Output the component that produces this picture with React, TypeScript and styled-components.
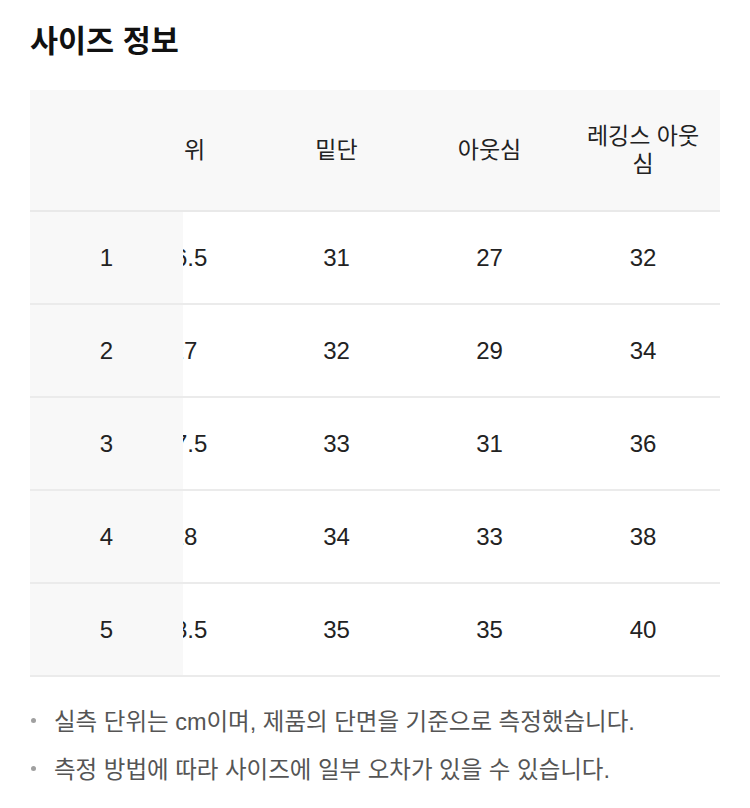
import React, { useLayoutEffect, useRef } from "react";
import styled, { createGlobalStyle } from "styled-components";

const GlobalStyle = createGlobalStyle`
  html, body { margin: 0; padding: 0; background: #ffffff; }
  body {
    font-family: "Liberation Sans", "Noto Sans CJK KR", sans-serif;
    color: #222222;
    -webkit-font-smoothing: antialiased;
  }
`;

const Page = styled.div`
  width: 750px;
  padding: 21px 30px 0 30px;
  box-sizing: border-box;
`;

const Title = styled.h2`
  margin: 0 0 28px 0;
  font-size: 30.5px;
  line-height: 41px;
  font-weight: 700;
  color: #111111;
`;

const ScrollArea = styled.div`
  width: 690px;
  overflow-x: auto;
  scrollbar-width: none;
  &::-webkit-scrollbar { display: none; }
`;

const Table = styled.table`
  width: 765px;
  table-layout: fixed;
  border-collapse: separate;
  border-spacing: 0;
`;

const HeadCell = styled.th<{ $sticky?: boolean }>`
  height: 122px;
  padding: 0 14px;
  box-sizing: border-box;
  background: #f8f8f8;
  border-bottom: 2px solid #e9e9e9;
  font-size: 23px;
  line-height: 28px;
  font-weight: 400;
  color: #222222;
  text-align: center;
  vertical-align: middle;
  ${(p) => (p.$sticky ? "position: sticky; left: 0; z-index: 2;" : "")}
`;

const BodyCell = styled.td<{ $sticky?: boolean }>`
  height: 93px;
  padding: 0;
  box-sizing: border-box;
  background: ${(p) => (p.$sticky ? "#f8f8f8" : "#ffffff")};
  border-bottom: 2px solid #ebebeb;
  font-size: 24px;
  color: #222222;
  text-align: center;
  vertical-align: middle;
  ${(p) => (p.$sticky ? "position: sticky; left: 0; z-index: 1;" : "")}
`;

const Notes = styled.ul`
  list-style: none;
  margin: 19px 0 0 0;
  padding: 0;
`;

const Note = styled.li`
  display: flex;
  align-items: center;
  height: 48px;
  font-size: 23.5px;
  color: #555555;
  white-space: nowrap;
  &::before {
    content: "";
    width: 5px;
    height: 5px;
    border-radius: 50%;
    background: #a0a0a0;
    margin: 0 18px 0 1px;
    flex: none;
  }
`;

const columns = [
  { label: "", width: 153 },
  { label: "밑위", width: 152 },
  { label: "밑단", width: 153 },
  { label: "아웃심", width: 153 },
  { label: "레깅스 아웃심", width: 154 },
];

const rows = [
  ["1", "26.5", "31", "27", "32"],
  ["2", "27", "32", "29", "34"],
  ["3", "27.5", "33", "31", "36"],
  ["4", "28", "34", "33", "38"],
  ["5", "28.5", "35", "35", "40"],
];

export default function App() {
  const scrollRef = useRef<HTMLDivElement>(null);
  useLayoutEffect(() => {
    const el = scrollRef.current;
    if (el) el.scrollLeft = el.scrollWidth;
  }, []);

  return (
    <>
      <GlobalStyle />
      <Page>
        <Title>사이즈 정보</Title>
        <ScrollArea ref={scrollRef}>
          <Table>
            <colgroup>
              {columns.map((c, i) => (
                <col key={i} style={{ width: c.width }} />
              ))}
            </colgroup>
            <thead>
              <tr>
                {columns.map((c, i) => (
                  <HeadCell key={i} $sticky={i === 0}>
                    {c.label}
                  </HeadCell>
                ))}
              </tr>
            </thead>
            <tbody>
              {rows.map((r, ri) => (
                <tr key={ri}>
                  {r.map((v, ci) => (
                    <BodyCell key={ci} $sticky={ci === 0}>
                      {v}
                    </BodyCell>
                  ))}
                </tr>
              ))}
            </tbody>
          </Table>
        </ScrollArea>
        <Notes>
          <Note>실측 단위는 cm이며, 제품의 단면을 기준으로 측정했습니다.</Note>
          <Note>측정 방법에 따라 사이즈에 일부 오차가 있을 수 있습니다.</Note>
        </Notes>
      </Page>
    </>
  );
}
